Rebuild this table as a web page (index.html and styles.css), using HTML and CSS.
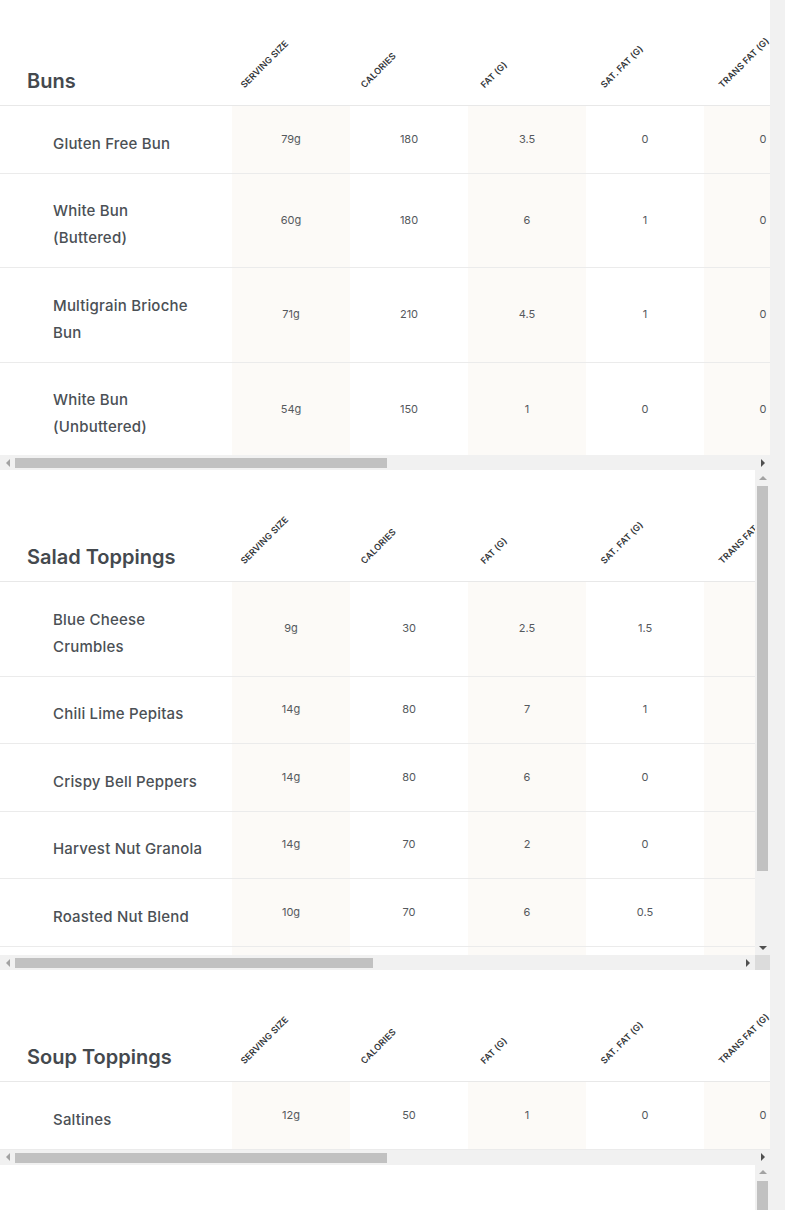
FILE: index.html
```html
<!DOCTYPE html>
<html lang="en">
<head>
<meta charset="utf-8">
<title>Nutrition</title>
<link rel="stylesheet" href="styles.css">
</head>
<body>
<main class="page">

<section class="menu-section menu-section--first">
  <div class="table-view table-view--first">
    <table class="nutrition">
      <colgroup><col class="c-name"><col class="c-val"><col class="c-val"><col class="c-val"><col class="c-val"><col class="c-val"><col class="c-val"><col class="c-val"><col class="c-val"><col class="c-val"><col class="c-val"><col class="c-val"></colgroup>
      <thead>
        <tr>
          <th class="title">Buns</th>
          <th class="lbl"><span>Serving Size</span></th>
          <th class="lbl"><span>Calories</span></th>
          <th class="lbl"><span>Fat (g)</span></th>
          <th class="lbl"><span>Sat. Fat (g)</span></th>
          <th class="lbl"><span>Trans Fat (g)</span></th>
          <th class="lbl"><span>Cholesterol (mg)</span></th>
          <th class="lbl"><span>Sodium (mg)</span></th>
          <th class="lbl"><span>Carbs (g)</span></th>
          <th class="lbl"><span>Fiber (g)</span></th>
          <th class="lbl"><span>Sugars (g)</span></th>
          <th class="lbl"><span>Protein (g)</span></th>
        </tr>
      </thead>
      <tbody>
        <tr><td class="name">Gluten Free Bun</td><td>79g</td><td>180</td><td>3.5</td><td>0</td><td>0</td><td>0</td><td>400</td><td>33</td><td>1</td><td>5</td><td>3</td></tr>
        <tr><td class="name">White Bun (Buttered)</td><td>60g</td><td>180</td><td>6</td><td>1</td><td>0</td><td>5</td><td>300</td><td>27</td><td>1</td><td>3</td><td>5</td></tr>
        <tr><td class="name">Multigrain Brioche Bun</td><td>71g</td><td>210</td><td>4.5</td><td>1</td><td>0</td><td>15</td><td>320</td><td>34</td><td>3</td><td>5</td><td>8</td></tr>
        <tr><td class="name">White Bun (Unbuttered)</td><td>54g</td><td>150</td><td>1</td><td>0</td><td>0</td><td>0</td><td>290</td><td>28</td><td>1</td><td>3</td><td>5</td></tr>
      </tbody>
    </table>
  </div>
  <div class="hbar-row">
    <div class="hbar">
      <span class="sb-btn"><span class="arrow arrow-left"></span></span>
      <div class="htrack"><div class="hthumb" style="width: 372px"></div></div>
      <span class="sb-btn"><span class="arrow arrow-right"></span></span>
    </div>
  </div>
</section>

<section class="menu-section">
  <div class="view-row">
    <div class="table-view table-view--tall">
      <table class="nutrition">
        <colgroup><col class="c-name"><col class="c-val"><col class="c-val"><col class="c-val"><col class="c-val"><col class="c-val"><col class="c-val"><col class="c-val"><col class="c-val"><col class="c-val"><col class="c-val"><col class="c-val"></colgroup>
        <thead>
          <tr>
            <th class="title">Salad Toppings</th>
            <th class="lbl"><span>Serving Size</span></th>
            <th class="lbl"><span>Calories</span></th>
            <th class="lbl"><span>Fat (g)</span></th>
            <th class="lbl"><span>Sat. Fat (g)</span></th>
            <th class="lbl"><span>Trans Fat (g)</span></th>
            <th class="lbl"><span>Cholesterol (mg)</span></th>
            <th class="lbl"><span>Sodium (mg)</span></th>
            <th class="lbl"><span>Carbs (g)</span></th>
            <th class="lbl"><span>Fiber (g)</span></th>
            <th class="lbl"><span>Sugars (g)</span></th>
            <th class="lbl"><span>Protein (g)</span></th>
          </tr>
        </thead>
        <tbody>
          <tr><td class="name">Blue Cheese Crumbles</td><td>9g</td><td>30</td><td>2.5</td><td>1.5</td><td>0</td><td>5</td><td>105</td><td>0</td><td>0</td><td>0</td><td>2</td></tr>
          <tr><td class="name">Chili Lime Pepitas</td><td>14g</td><td>80</td><td>7</td><td>1</td><td>0</td><td>0</td><td>75</td><td>2</td><td>1</td><td>0</td><td>4</td></tr>
          <tr><td class="name">Crispy Bell Peppers</td><td>14g</td><td>80</td><td>6</td><td>0</td><td>0</td><td>0</td><td>95</td><td>6</td><td>1</td><td>2</td><td>1</td></tr>
          <tr><td class="name">Harvest Nut Granola</td><td>14g</td><td>70</td><td>2</td><td>0</td><td>0</td><td>0</td><td>10</td><td>10</td><td>1</td><td>4</td><td>2</td></tr>
          <tr><td class="name">Roasted Nut Blend</td><td>10g</td><td>70</td><td>6</td><td>0.5</td><td>0</td><td>0</td><td>25</td><td>2</td><td>1</td><td>1</td><td>2</td></tr>
          <tr><td class="name">Shredded Parmesan Cheese</td><td>7g</td><td>30</td><td>2</td><td>1</td><td>0</td><td>5</td><td>100</td><td>0</td><td>0</td><td>0</td><td>3</td></tr>
        </tbody>
      </table>
    </div>
    <div class="vbar">
      <span class="sb-btn"><span class="arrow arrow-up"></span></span>
      <div class="vtrack"><div class="vthumb" style="height: 385px"></div></div>
      <span class="sb-btn"><span class="arrow arrow-down"></span></span>
    </div>
  </div>
  <div class="hbar-row">
    <div class="hbar">
      <span class="sb-btn"><span class="arrow arrow-left"></span></span>
      <div class="htrack"><div class="hthumb" style="width: 358px"></div></div>
      <span class="sb-btn"><span class="arrow arrow-right"></span></span>
    </div>
    <div class="sb-corner"></div>
  </div>
</section>

<section class="menu-section">
  <div class="table-view">
    <table class="nutrition">
      <colgroup><col class="c-name"><col class="c-val"><col class="c-val"><col class="c-val"><col class="c-val"><col class="c-val"><col class="c-val"><col class="c-val"><col class="c-val"><col class="c-val"><col class="c-val"><col class="c-val"></colgroup>
      <thead>
        <tr>
          <th class="title">Soup Toppings</th>
          <th class="lbl"><span>Serving Size</span></th>
          <th class="lbl"><span>Calories</span></th>
          <th class="lbl"><span>Fat (g)</span></th>
          <th class="lbl"><span>Sat. Fat (g)</span></th>
          <th class="lbl"><span>Trans Fat (g)</span></th>
          <th class="lbl"><span>Cholesterol (mg)</span></th>
          <th class="lbl"><span>Sodium (mg)</span></th>
          <th class="lbl"><span>Carbs (g)</span></th>
          <th class="lbl"><span>Fiber (g)</span></th>
          <th class="lbl"><span>Sugars (g)</span></th>
          <th class="lbl"><span>Protein (g)</span></th>
        </tr>
      </thead>
      <tbody>
        <tr><td class="name">Saltines</td><td>12g</td><td>50</td><td>1</td><td>0</td><td>0</td><td>0</td><td>160</td><td>9</td><td>0</td><td>0</td><td>1</td></tr>
      </tbody>
    </table>
  </div>
  <div class="hbar-row">
    <div class="hbar">
      <span class="sb-btn"><span class="arrow arrow-left"></span></span>
      <div class="htrack"><div class="hthumb" style="width: 372px"></div></div>
      <span class="sb-btn"><span class="arrow arrow-right"></span></span>
    </div>
  </div>
</section>

<section class="menu-section">
  <div class="view-row">
    <div class="table-view table-view--tall">
      <table class="nutrition">
        <colgroup><col class="c-name"><col class="c-val"><col class="c-val"><col class="c-val"><col class="c-val"><col class="c-val"><col class="c-val"><col class="c-val"><col class="c-val"><col class="c-val"><col class="c-val"><col class="c-val"></colgroup>
        <thead>
          <tr>
            <th class="title">Dressings</th>
            <th class="lbl"><span>Serving Size</span></th>
            <th class="lbl"><span>Calories</span></th>
            <th class="lbl"><span>Fat (g)</span></th>
            <th class="lbl"><span>Sat. Fat (g)</span></th>
            <th class="lbl"><span>Trans Fat (g)</span></th>
            <th class="lbl"><span>Cholesterol (mg)</span></th>
            <th class="lbl"><span>Sodium (mg)</span></th>
            <th class="lbl"><span>Carbs (g)</span></th>
            <th class="lbl"><span>Fiber (g)</span></th>
            <th class="lbl"><span>Sugars (g)</span></th>
            <th class="lbl"><span>Protein (g)</span></th>
          </tr>
        </thead>
        <tbody>
          <tr><td class="name">Balsamic Vinaigrette</td><td>43g</td><td>150</td><td>15</td><td>2</td><td>0</td><td>0</td><td>230</td><td>4</td><td>0</td><td>3</td><td>0</td></tr>
          <tr><td class="name">Buttermilk Ranch</td><td>43g</td><td>210</td><td>22</td><td>3.5</td><td>0</td><td>15</td><td>320</td><td>2</td><td>0</td><td>1</td><td>1</td></tr>
          <tr><td class="name">Caesar Dressing</td><td>43g</td><td>230</td><td>24</td><td>4</td><td>0</td><td>20</td><td>390</td><td>2</td><td>0</td><td>1</td><td>2</td></tr>
          <tr><td class="name">Honey Mustard</td><td>43g</td><td>170</td><td>14</td><td>2</td><td>0</td><td>10</td><td>260</td><td>11</td><td>0</td><td>10</td><td>1</td></tr>
          <tr><td class="name">Lemon Herb Vinaigrette</td><td>43g</td><td>160</td><td>17</td><td>2.5</td><td>0</td><td>0</td><td>280</td><td>2</td><td>0</td><td>1</td><td>0</td></tr>
          <tr><td class="name">Sesame Ginger</td><td>43g</td><td>140</td><td>11</td><td>1.5</td><td>0</td><td>0</td><td>350</td><td>9</td><td>0</td><td>8</td><td>1</td></tr>
        </tbody>
      </table>
    </div>
    <div class="vbar">
      <span class="sb-btn"><span class="arrow arrow-up"></span></span>
      <div class="vtrack"><div class="vthumb" style="height: 300px"></div></div>
      <span class="sb-btn"><span class="arrow arrow-down"></span></span>
    </div>
  </div>
  <div class="hbar-row">
    <div class="hbar">
      <span class="sb-btn"><span class="arrow arrow-left"></span></span>
      <div class="htrack"><div class="hthumb" style="width: 358px"></div></div>
      <span class="sb-btn"><span class="arrow arrow-right"></span></span>
    </div>
    <div class="sb-corner"></div>
  </div>
</section>

</main>
</body>
</html>
```

FILE: styles.css
```css
html {
  overflow: hidden;
}

body {
  margin: 0;
  background: #f1f1f1;
  font-family: Inter, "Noto Sans", Arial, sans-serif;
  color: #4b5055;
}

.page {
  width: 770px;
  background: #ffffff;
}

.menu-section {
  display: flex;
  flex-direction: column;
}

.menu-section--first {
  margin-top: -6px;
}

.table-view {
  overflow: hidden;
  width: 100%;
}

.table-view--first {
  height: 461px;
}

.view-row {
  display: flex;
}

.table-view--tall {
  flex: 1;
  min-width: 0;
  height: 485px;
}

/* ---------- table ---------- */

.nutrition {
  table-layout: fixed;
  width: 1530px;
  border-collapse: separate;
  border-spacing: 0;
}

.c-name { width: 232px; }
.c-val { width: 118px; }

.nutrition th {
  box-sizing: border-box;
  height: 112px;
  border-bottom: 1px solid #e8e8e8;
  vertical-align: bottom;
  text-align: left;
  white-space: nowrap;
  background: #ffffff;
}

.nutrition th.title {
  padding: 0 0 12px 27px;
  font-size: 20px;
  line-height: 24px;
  font-weight: 600;
  color: #44494e;
}

.nutrition th.lbl {
  padding: 0 0 15px 14px;
  font-size: 9px;
  line-height: 10px;
  font-weight: 600;
  letter-spacing: 0.1px;
  text-transform: uppercase;
  color: #34373a;
}

.nutrition th.lbl:nth-child(3) { padding-left: 16px; }
.nutrition th.lbl:nth-child(4) { padding-left: 18px; }
.nutrition th.lbl:nth-child(5) { padding-left: 20px; }
.nutrition th.lbl:nth-child(n+6) { padding-left: 20px; }

.nutrition th.lbl span {
  display: inline-block;
  transform: rotate(-45deg);
  transform-origin: 0 100%;
}

.nutrition td {
  border-bottom: 1px solid #ebebeb;
  text-align: center;
  vertical-align: middle;
  font-size: 11px;
  color: #55595d;
  padding: 0 0 1px;
}

.nutrition td:nth-child(even) {
  background: #fcfaf7;
}

.nutrition td.name {
  padding: 23.5px 28px 16px 53px;
  text-align: left;
  font-size: 15px;
  line-height: 27px;
  font-weight: 500;
  letter-spacing: 0.2px;
  color: #4b5055;
}

/* ---------- scrollbars ---------- */

.hbar-row {
  display: flex;
  height: 15px;
}

.hbar {
  flex: 1;
  display: flex;
  background: #f1f1f1;
}

.sb-corner {
  width: 15px;
  background: #dcdcdc;
}

.sb-btn {
  flex: none;
  width: 15px;
  height: 15px;
  display: flex;
  align-items: center;
  justify-content: center;
}

.htrack {
  flex: 1;
  padding-top: 3px;
}

.hthumb {
  height: 10px;
  background: #c1c1c1;
}

.vbar {
  flex: none;
  width: 15px;
  display: flex;
  flex-direction: column;
  background: #f1f1f1;
}

.vtrack {
  flex: 1;
  padding-left: 2px;
  padding-top: 1px;
}

.vthumb {
  width: 11px;
  background: #c1c1c1;
}

.arrow {
  width: 0;
  height: 0;
  border: 4px solid transparent;
}

.arrow-left {
  border-left: 0;
  border-right-color: #a3a3a3;
}

.arrow-right {
  border-right: 0;
  border-left-color: #505050;
}

.arrow-up {
  border-top: 0;
  border-bottom-color: #a3a3a3;
}

.arrow-down {
  border-bottom: 0;
  border-top-color: #505050;
}
```
